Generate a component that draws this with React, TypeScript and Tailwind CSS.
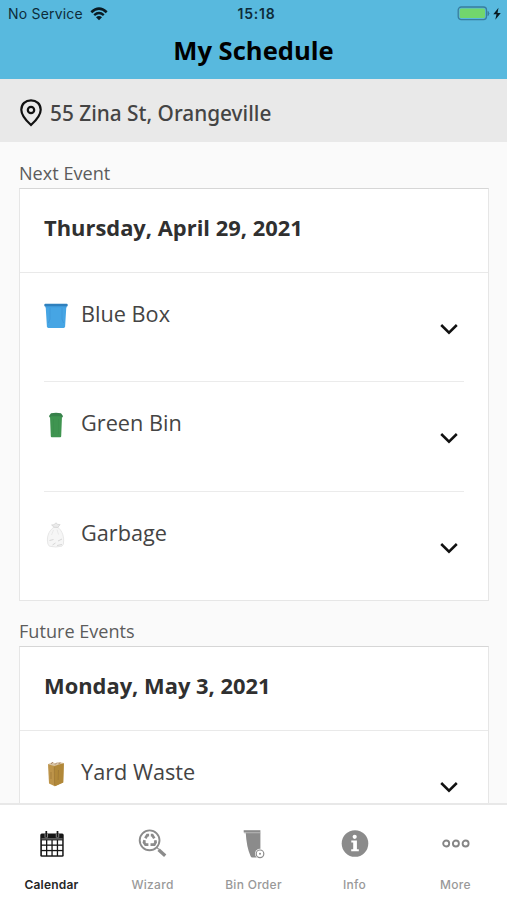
import type { ReactNode } from 'react'

type EventItem = { name: string; icon: ReactNode }

function BlueBoxIcon() {
  return (
    <svg width="24" height="26" viewBox="0 0 24 26">
      <path d="M1.6 3h20.8l-1.3 20.6q-.1 1.4-1.5 1.4H4.4q-1.4 0-1.5-1.4z" fill="#46a5e4" />
      <path d="M6 5v11l-1.6 4M18 5v11l1.6 4" fill="none" stroke="#3f99da" strokeWidth="1" />
      <rect x="0.3" y="0.8" width="23.4" height="2.6" rx="1" fill="#2f80bd" />
      <path d="M1 3.8h22" stroke="#419bdb" strokeWidth="0.8" />
    </svg>
  )
}

function GreenBinIcon() {
  return (
    <svg width="24" height="26" viewBox="0 0 24 26">
      <path d="M6 4h12l-.8 20.3q0 .9-1 .9H7.8q-1 0-1-.9z" fill="#3f9450" />
      <path d="M7 1.3q5-1.2 10 0l1.8 2.4v1.6h-1.4v-1H6.6v1H5.2V3.7z" fill="#37814a" />
      <path d="M9.5 7v15M14.5 7v15" stroke="#3b8d4c" strokeWidth="0.6" />
    </svg>
  )
}

function GarbageIcon() {
  return (
    <svg width="24" height="26" viewBox="0 0 24 26">
      <path
        d="M10 5.2C6 8 3.4 12 3.4 18q0 5 2 6.2 6 1.6 12.4 0Q20 23 19.7 18.5C19.5 12 17.2 8 13.8 5.2z"
        fill="#f6f6f6"
        stroke="#dedede"
        strokeWidth="0.7"
      />
      <path d="M10 5.2L7.6 3l2.3-.3L12 .8l1.8 1.6 2.3.2-2.3 2.8z" fill="#ebebeb" stroke="#cfcfcf" strokeWidth="0.7" />
      <path d="M9.5 8l-2 5M13 7.5l1.5 5" stroke="#e4e4e4" strokeWidth="0.8" fill="none" />
      <path d="M5.5 18.5l4-1M14 19l4-2M8.5 23l3-2M13 23.5l5-1" stroke="#cecece" strokeWidth="0.8" fill="none" />
    </svg>
  )
}

function YardWasteIcon() {
  return (
    <svg width="24" height="26" viewBox="0 0 24 26">
      <path d="M4 3L19.8 2.2 19.2 21.5 10.8 25.3 5 22.5z" fill="#bd944a" />
      <path d="M10.3 5l9.5-2.8-.6 19.3-8.4 3.8z" fill="#b18839" />
      <path d="M4 3.2L8.5 1l3 1.5L15 .9l4.8 1.2L10.3 5z" fill="#d9c5a5" />
      <path d="M7 2.8l2-1.6M11 3.6L13 1.5M14.5 2.8l2-1" stroke="#9c7661" strokeWidth="0.8" />
      <path d="M10.3 6l.3 18M7 11v7M14.5 9l-.4 10" stroke="#9c7634" strokeWidth="0.7" />
    </svg>
  )
}

function CalendarIcon() {
  return (
    <svg width="26" height="28" viewBox="0 0 26 28">
      <rect x="1.3" y="3.4" width="23.4" height="23.4" rx="1.5" fill="#161616" />
      <path d="M7.3 3.4V7.5M18.5 3.4V7.5" stroke="#999" strokeWidth="3.4" />
      <path d="M7.3 1v6M18.5 1v6" stroke="#161616" strokeWidth="1.7" />
      <path d="M2.5 8.9h21" stroke="#888" strokeWidth="1" />
      <g fill="#fff">
        {[10.4, 15.8, 21.2].map((y) =>
          [2.9, 8.3, 13.7, 19.1].map((x) => <rect key={`${x}-${y}`} x={x} y={y} width="4.1" height="4.1" />),
        )}
      </g>
    </svg>
  )
}

function WizardIcon() {
  return (
    <svg width="30" height="30" viewBox="0 0 30 30" fill="none" stroke="#8b8b8b">
      <circle cx="11.6" cy="11.3" r="9.9" strokeWidth="1.9" />
      <path d="M7.3 9.3l2-3.2h1.8M12.8 6.2h1.5l2 3.2" strokeWidth="2.7" />
      <path d="M17.2 11.3l.4 2-1.3 2.3h-3.8" strokeWidth="2.7" />
      <path d="M10.4 15.6H7.5L6 13.4l.6-2.3" strokeWidth="2.7" />
      <path d="M20.6 20.8l6.6 6" strokeWidth="3.4" />
      <path d="M18.8 18.4l2 2" strokeWidth="1.2" />
    </svg>
  )
}

function BinOrderIcon() {
  return (
    <svg width="24" height="30" viewBox="0 0 24 30">
      <path d="M1.7 1.2H18.4V3.5H1.7z" fill="#8b8b8b" />
      <path d="M3.7 3.5h14.7v20l-2 5H10.5Q9 28.5 8.5 27 4.5 18 3.7 3.5z" fill="#8b8b8b" />
      <path d="M2 3.9h16.4" stroke="#b5b5b5" strokeWidth="0.7" />
      <circle cx="18" cy="24.8" r="5" fill="#fff" />
      <circle cx="18" cy="24.8" r="3.8" fill="none" stroke="#8b8b8b" strokeWidth="1.2" />
      <circle cx="18" cy="24.8" r="1" fill="#8b8b8b" />
    </svg>
  )
}

function InfoIcon() {
  return (
    <svg width="28" height="28" viewBox="0 0 28 28">
      <circle cx="14" cy="13.5" r="13.3" fill="#8b8b8b" />
      <circle cx="13.7" cy="6.8" r="2.1" fill="#fff" />
      <path d="M10.3 10.5h5.6v8.8h1.9v1.9h-7.6v-1.9h2v-6.9h-1.9z" fill="#fff" />
    </svg>
  )
}

function MoreIcon() {
  return (
    <svg width="30" height="10" viewBox="0 0 30 10" fill="none" stroke="#858585" strokeWidth="1.9">
      <circle cx="5.2" cy="4.5" r="3" />
      <circle cx="14.9" cy="4.5" r="3" />
      <circle cx="24.6" cy="4.5" r="3" />
    </svg>
  )
}

function Chevron() {
  return (
    <svg width="20" height="12" viewBox="0 0 20 12" fill="none" stroke="#111" strokeWidth="2.5">
      <path d="M2.2 2L10 9.7 17.8 2" />
    </svg>
  )
}

function StatusBar() {
  return (
    <div className="grid h-7 grid-cols-[1fr_auto_1fr] items-center pl-2 pr-1 font-['Inter'] text-[14px] text-[#0d2c3a]">
      <div className="flex items-center gap-[7px] pb-px">
        <span className="tracking-[0.2px]">No Service</span>
        <svg width="18" height="14" viewBox="0 0 18 14" fill="none" stroke="#0a1b23">
          <path d="M1.3 5.2Q9-1.8 16.7 5.2" strokeWidth="2.6" />
          <path d="M4.2 8.2q4.8-4.2 9.6 0" strokeWidth="2.4" />
          <path d="M6 10.3Q9 7.9 12 10.3L9 13.3z" fill="#0a1b23" stroke="none" />
        </svg>
      </div>
      <span className="pb-px pl-[2px] font-semibold tracking-[0.8px]">15:18</span>
      <div className="flex items-center justify-end">
        <svg width="46" height="16" viewBox="0 0 46 16">
          <rect x="1.2" y="1" width="28.3" height="12.6" rx="3" fill="none" stroke="#397e9d" strokeWidth="1.3" />
          <rect x="2.7" y="2.5" width="25.3" height="9.6" rx="1.5" fill="#72d66d" />
          <path d="M31 5.5q2 2 0 4z" fill="#397e9d" stroke="#397e9d" />
          <path d="M41.5 1.8L36.3 8.3h3.2l-1.2 5.5 5.5-6.8h-3.3z" fill="#0a1b23" />
        </svg>
      </div>
    </div>
  )
}

function EventCard({ date, items }: { date: string; items: EventItem[] }) {
  return (
    <div className="border border-[#e6e6e6] border-t-[#d6d6d6] bg-white">
      <h2 className="h-[84px] border-b border-[#e9e9e9] pl-6 pt-[22px] text-[21.9px] font-bold leading-[34px] text-[#303030]">
        {date}
      </h2>
      <div className="px-6">
        {items.map((item) => (
          <div key={item.name} className="flex h-[109.3px] justify-between border-b border-[#ebebeb] last:h-[108.4px] last:border-b-0">
            <div className="flex items-start pt-[24px]">
              <div className="pt-[6px]">{item.icon}</div>
              <span className="pl-[13px] pt-px text-[21.7px] leading-[32px] text-[#444]">{item.name}</span>
            </div>
            <div className="pr-[5px] pt-[50px]">
              <Chevron />
            </div>
          </div>
        ))}
      </div>
    </div>
  )
}

const nextItems: EventItem[] = [
  { name: 'Blue Box', icon: <BlueBoxIcon /> },
  { name: 'Green Bin', icon: <GreenBinIcon /> },
  { name: 'Garbage', icon: <GarbageIcon /> },
]

const futureItems: EventItem[] = [{ name: 'Yard Waste', icon: <YardWasteIcon /> }]

const tabs = [
  { label: 'Calendar', icon: <CalendarIcon />, active: true },
  { label: 'Wizard', icon: <WizardIcon />, active: false },
  { label: 'Bin Order', icon: <BinOrderIcon />, active: false },
  { label: 'Info', icon: <InfoIcon />, active: false },
  { label: 'More', icon: <MoreIcon />, active: false },
]

export default function App() {
  return (
    <div className="flex h-[900px] w-[507px] flex-col overflow-hidden bg-[#fafafa] font-['Open_Sans','Noto_Sans',sans-serif]">
      <header className="h-[79px] shrink-0 bg-[#58b9de]">
        <StatusBar />
        <h1 className="text-center text-[25.6px] font-bold leading-[46px] text-black">My Schedule</h1>
      </header>

      {/* Address */}
      <div className="flex h-[63px] shrink-0 items-center bg-[#e9e9e9] pl-5 pt-1">
        <svg width="22" height="28" viewBox="0 0 22 28" fill="none" stroke="#111" strokeWidth="2.2">
          <path d="M11 26Q1.3 17.3 1.3 10.7C1.3 5 5.5 1.3 11 1.3S20.7 5 20.7 10.7Q20.7 17.3 11 26z" />
          <circle cx="11" cy="11" r="3.2" />
        </svg>
        <span className="pl-2 pt-[2px] font-['Noto_Sans'] text-[20.8px] font-medium text-[#444]">55 Zina St, Orangeville</span>
      </div>

      {/* Events */}
      <main className="min-h-0 flex-1 overflow-hidden pl-[19px] pr-[18px] pt-[16px]">
        <p className="h-[30px] text-[18.1px] leading-[30px] text-[#5c5c5c]">Next Event</p>
        <EventCard date="Thursday, April 29, 2021" items={nextItems} />
        <p className="mt-[15px] h-[30px] text-[18.1px] leading-[30px] text-[#5c5c5c]">Future Events</p>
        <EventCard date="Monday, May 3, 2021" items={futureItems} />
      </main>

      {/* Tabs */}
      <nav className="grid h-[97px] shrink-0 grid-cols-5 border-t-2 border-[#e8e8e8] bg-white px-[1px] font-['Inter']">
        {tabs.map((tab) => (
          <div key={tab.label} className="flex flex-col items-center">
            <div className="flex h-[77px] items-center">{tab.icon}</div>
            <span
              className={
                tab.active
                  ? '-mt-[5px] text-[12px] font-semibold leading-4 tracking-[0.2px] text-[#262626]'
                  : '-mt-[5px] text-[12px] font-medium leading-4 tracking-[0.3px] text-[#999]'
              }
            >
              {tab.label}
            </span>
          </div>
        ))}
      </nav>
    </div>
  )
}
